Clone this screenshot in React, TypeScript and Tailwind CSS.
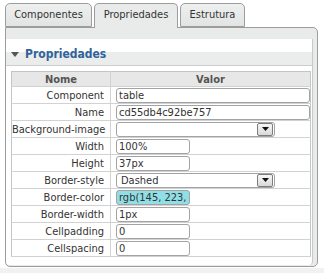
import React from "react";

type Row = {
  label: string;
  value: string;
  kind: "text" | "short" | "select";
  highlight?: boolean;
};

const ROWS: Row[] = [
  { label: "Component", value: "table", kind: "text" },
  { label: "Name", value: "cd55db4c92be757", kind: "text" },
  { label: "Background-image", value: "", kind: "select" },
  { label: "Width", value: "100%", kind: "short" },
  { label: "Height", value: "37px", kind: "short" },
  { label: "Border-style", value: "Dashed", kind: "select" },
  { label: "Border-color", value: "rgb(145, 223, 230)", kind: "short", highlight: true },
  { label: "Border-width", value: "1px", kind: "short" },
  { label: "Cellpadding", value: "0", kind: "short" },
  { label: "Cellspacing", value: "0", kind: "short" },
];

const TABS = [
  { label: "Componentes", width: "w-[87px]" },
  { label: "Propriedades", width: "w-[84px]", active: true },
  { label: "Estrutura", width: "w-[65px]" },
];

function DropButton() {
  return (
    <span className="flex h-[13px] w-[16px] items-center justify-center rounded-[2px] border border-[#7d7d7d] bg-[linear-gradient(to_bottom,#f7f7f7,#d9d9d9)]">
      <svg width="7" height="4" viewBox="0 0 7 4">
        <path d="M0 0h7L3.5 4z" fill="#111" />
      </svg>
    </span>
  );
}

function Field({ row }: { row: Row }) {
  if (row.kind === "select") {
    return (
      <div className="flex h-[15px] w-[159px] items-center justify-between rounded-[3px] border border-[#a3a3a3] bg-white pl-[4px] pr-[1px]">
        <span className="truncate leading-none">{row.value}</span>
        <DropButton />
      </div>
    );
  }
  const width = row.kind === "text" ? "w-[194px]" : "w-[74px]";
  const bg = row.highlight ? "bg-[#91dfe6]" : "bg-white";
  return (
    <div
      className={`flex h-[15px] ${width} items-center overflow-hidden whitespace-nowrap rounded-[3px] border border-[#a3a3a3] ${bg} pl-[2px]`}
    >
      <span className="leading-none">{row.value}</span>
    </div>
  );
}

export default function App() {
  return (
    <div
      className="flex h-[273px] w-[324px] flex-col bg-white pt-[3px] text-[11px] text-[#333]"
      style={{ fontFamily: '"DejaVu Sans Condensed", "DejaVu Sans", sans-serif' }}
    >
      <div className="flex gap-[2px] px-[5px]">
        {TABS.map((t) => (
          <div
            key={t.label}
            className={`relative flex ${t.width} items-center justify-center rounded-t-[5px] border border-[#9c9c9c] ${
              t.active
                ? "z-10 -mb-px h-[25px] border-b-0 bg-[#e9ebeb] pb-px"
                : "h-[24px] bg-[linear-gradient(to_bottom,#eef0f0,#e2e4e4)]"
            }`}
          >
            {t.label}
          </div>
        ))}
      </div>

      <div className="mx-[5px] h-[240px] w-[313px] rounded-[5px] rounded-tl-none border border-[#9c9c9c] bg-[#e9ebeb] pt-[11px] pr-[4px]">
        <div className="flex h-[226px] flex-col rounded-b-[4px] border-r border-[#c8c8c8] bg-white">
          <div className="flex h-[27px] items-center gap-[6px] border-b border-[#cdcdcd] bg-[linear-gradient(to_bottom,#ffffff_50%,#ebecec_50%)] pl-[5px] pt-[3px]">
            <svg width="8" height="5" viewBox="0 0 8 5" className="mt-px">
              <path d="M0 0h8L4 5z" fill="#555" />
            </svg>
            <span className="text-[12px] font-bold text-[#2f6399]">Propriedades</span>
          </div>

          <div className="pl-[5px] pr-[2px] pt-[5px]">
            <table className="w-[300px] table-fixed border-collapse border border-[#c4c4c4]">
              <colgroup>
                <col className="w-[99px]" />
                <col />
              </colgroup>
              <thead>
                <tr className="h-[15px] bg-[#e7e7e7]">
                  <th className="border-b border-r border-[#d2d2d2] p-0 text-center font-bold leading-none text-[#555]">
                    Nome
                  </th>
                  <th className="border-b border-[#d2d2d2] p-0 text-center font-bold leading-none text-[#555]">
                    Valor
                  </th>
                </tr>
              </thead>
              <tbody>
                {ROWS.map((r) => (
                  <tr key={r.label} className="h-[17px]">
                    <td className="whitespace-nowrap border-b border-r border-[#d2d2d2] p-0 pr-[6px] text-right leading-none">
                      {r.label}
                    </td>
                    <td className="border-b border-[#d2d2d2] py-0 pl-[5px] pr-0">
                      <Field row={r} />
                    </td>
                  </tr>
                ))}
              </tbody>
            </table>
          </div>
        </div>
      </div>
      <div className="mt-px flex-1 bg-[#f1f1f1]" />
    </div>
  );
}
